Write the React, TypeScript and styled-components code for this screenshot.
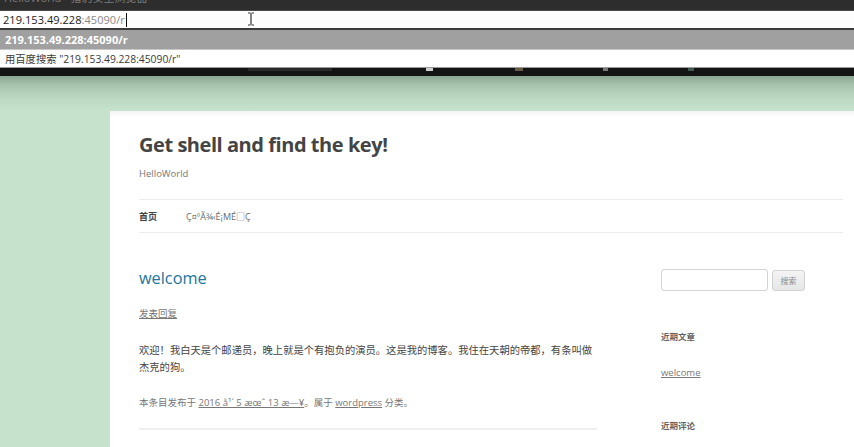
import React from "react";
import styled, { createGlobalStyle } from "styled-components";

const Global = createGlobalStyle`
  html, body { margin: 0; padding: 0; }
  body { width: 854px; height: 447px; overflow: hidden; background: #c6e2cc; }
  #root { width: 854px; height: 447px; }
`;

const CJK = `"Open Sans", "Noto Sans CJK SC", sans-serif`;

const Screen = styled.div`
  width: 854px;
  height: 447px;
  overflow: hidden;
  display: flex;
  flex-direction: column;
  font-family: ${CJK};
`;

const TitleBar = styled.div`
  height: 11px;
  flex: none;
  background: #2d2d2d;
  overflow: hidden;
  border-bottom: 1px solid #4a4a4a;
  box-sizing: border-box;
`;

const TitleText = styled.div`
  margin-top: -9px;
  padding-left: 4px;
  font-size: 11px;
  line-height: 14px;
  color: #7c7c7c;
  white-space: nowrap;
`;

const AddressBar = styled.div`
  position: relative;
  height: 17px;
  flex: none;
  background: #fdfdfd;
  border-bottom: 2px solid #3a3a3a;
  display: flex;
  align-items: center;
  padding-left: 3px;
  font-size: 11px;
  letter-spacing: 0.05px;
`;

const Host = styled.span`
  color: #222;
`;

const Rest = styled.span`
  color: #8a8a8a;
`;

const Caret = styled.span`
  display: inline-block;
  width: 1px;
  height: 14px;
  background: #111;
  margin-left: 1px;
`;

const IBeam = styled.svg`
  position: absolute;
  left: 247px;
  top: 1px;
`;

const Suggestion = styled.div<{ $active?: boolean }>`
  height: ${(p) => (p.$active ? "19px" : "17px")};
  flex: none;
  display: flex;
  align-items: center;
  padding-left: 5px;
  background: ${(p) => (p.$active ? "#a0a0a0" : "#ffffff")};
  color: ${(p) => (p.$active ? "#ffffff" : "#3a3a3a")};
  font-weight: ${(p) => (p.$active ? 700 : 400)};
  font-size: ${(p) => (p.$active ? "11px" : "10.3px")};
  border-bottom: 1px solid ${(p) => (p.$active ? "#c8c8c8" : "#9a9a9a")};
  white-space: nowrap;
`;

const ToolStrip = styled.div`
  height: 8px;
  flex: none;
  background: #141414;
  display: flex;
  align-items: flex-start;
`;

const Blip = styled.span<{ $w: number; $ml: number; $c: string }>`
  display: block;
  width: ${(p) => p.$w}px;
  height: 3px;
  margin-left: ${(p) => p.$ml}px;
  background: ${(p) => p.$c};
`;

const Backdrop = styled.div`
  flex: 1;
  background: linear-gradient(
    to bottom,
    #8ea694 0px,
    #a9c4af 10px,
    #bcd8c2 22px,
    #c6e2cc 34px
  );
  padding: 35px 0 0 110px;
  overflow: hidden;
`;

const Page = styled.div`
  background: #ffffff;
  height: 100%;
  box-sizing: border-box;
  padding: 16px 11px 0 29px;
  background-image: linear-gradient(to bottom, #f4f4f4 0px, #ffffff 6px);
`;

const SiteTitle = styled.h1`
  margin: 0;
  font-family: "Open Sans", sans-serif;
  font-weight: 700;
  font-size: 20px;
  line-height: 36px;
  color: #444444;
  letter-spacing: -0.45px;
`;

const Tagline = styled.div`
  margin-top: 3px;
  font-size: 9.5px;
  line-height: 16px;
  color: #777777;
`;

const Nav = styled.nav`
  margin-top: 17px;
  border-top: 1px solid #ededed;
  border-bottom: 1px solid #ededed;
  height: 32px;
  display: flex;
  align-items: center;
  gap: 29px;
  font-size: 9px;
  color: #5e5e5e;
`;

const NavItem = styled.span<{ $bold?: boolean }>`
  font-weight: ${(p) => (p.$bold ? 700 : 400)};
  color: ${(p) => (p.$bold ? "#444" : "#6a6a6a")};
`;

const Columns = styled.div`
  display: grid;
  grid-template-columns: 458px 182px;
  column-gap: 64px;
`;

const Main = styled.main`
  padding-top: 33px;
`;

const PostTitle = styled.h2`
  margin: 0;
  font-family: "Open Sans", sans-serif;
  font-weight: 400;
  font-size: 16.3px;
  line-height: 24px;
  color: #21759b;
`;

const ReplyLink = styled.a`
  display: inline-block;
  margin-top: 17px;
  font-size: 9.5px;
  line-height: 14px;
  color: #777;
  text-decoration: underline;
`;

const Body = styled.p`
  margin: 20px 0 0 0;
  font-size: 10.3px;
  line-height: 17px;
  color: #444;
`;

const Meta = styled.div`
  margin-top: 19px;
  font-size: 9.5px;
  line-height: 16px;
  color: #777;
  padding-bottom: 17px;
  border-bottom: 2px solid #efefef;
`;

const MetaLink = styled.a`
  color: #777;
  text-decoration: underline;
`;

const Sidebar = styled.aside`
  padding-top: 36px;
`;

const SearchRow = styled.div`
  display: flex;
  gap: 4px;
  align-items: center;
`;

const SearchInput = styled.div`
  width: 107px;
  height: 22px;
  box-sizing: border-box;
  border: 1px solid #d4d4d4;
  border-radius: 3px;
  background: #fff;
`;

const SearchButton = styled.div`
  width: 33px;
  height: 21px;
  box-sizing: border-box;
  border: 1px solid #d2d2d2;
  border-radius: 3px;
  background: linear-gradient(to bottom, #f4f4f4, #e6e6e6);
  font-size: 8px;
  color: #8a8a8a;
  display: flex;
  align-items: center;
  justify-content: center;
`;

const WidgetTitle = styled.h3<{ $mt: number }>`
  margin: ${(p) => p.$mt}px 0 0 0;
  font-size: 8.5px;
  line-height: 12px;
  font-weight: 700;
  color: #636363;
`;

const WidgetLink = styled.a`
  display: block;
  margin-top: 24px;
  font-family: "Open Sans", sans-serif;
  font-size: 9.5px;
  line-height: 12px;
  color: #7a7a7a;
  text-decoration: underline;
`;

export default function App() {
  return (
    <>
      <Global />
      <Screen>
        <TitleBar>
          <TitleText>HelloWorld - 猎豹安全浏览器</TitleText>
        </TitleBar>
        <AddressBar>
          <Host>219.153.49.228</Host>
          <Rest>:45090/r</Rest>
          <Caret />
          <IBeam width="8" height="14" viewBox="0 0 8 14">
            <path d="M1 1h2.5M4.5 1H7M4 1.5v11M1 13h2.5M4.5 13H7" stroke="#333" strokeWidth="1.2" fill="none" />
          </IBeam>
        </AddressBar>
        <Suggestion $active>219.153.49.228:45090/r</Suggestion>
        <Suggestion>用百度搜索 "219.153.49.228:45090/r"</Suggestion>
        <ToolStrip>
          <Blip $w={84} $ml={248} $c="#2a2a2a" />
          <Blip $w={7} $ml={94} $c="#cfcfcf" />
          <Blip $w={8} $ml={82} $c="#6a5a4a" />
          <Blip $w={5} $ml={80} $c="#777" />
          <Blip $w={6} $ml={80} $c="#3f5a50" />
        </ToolStrip>
        <Backdrop>
          <Page>
            <header>
              <SiteTitle>Get shell and find the key!</SiteTitle>
              <Tagline>HelloWorld</Tagline>
            </header>
            <Nav>
              <NavItem $bold>首页</NavItem>
              <NavItem>Ç¤ºÃ¾‹É¡MÉ□Ç</NavItem>
            </Nav>
            <Columns>
              <Main>
                <PostTitle>welcome</PostTitle>
                <ReplyLink>发表回复</ReplyLink>
                <Body>
                  欢迎！我白天是个邮递员，晚上就是个有抱负的演员。这是我的博客。我住在天朝的帝都，有条叫做杰克的狗。
                </Body>
                <Meta>
                  本条目发布于 <MetaLink>2016 å¹´ 5 æœˆ 13 æ—¥</MetaLink>。属于{" "}
                  <MetaLink>wordpress</MetaLink> 分类。
                </Meta>
              </Main>
              <Sidebar>
                <SearchRow>
                  <SearchInput />
                  <SearchButton>搜索</SearchButton>
                </SearchRow>
                <WidgetTitle $mt={40}>近期文章</WidgetTitle>
                <WidgetLink>welcome</WidgetLink>
                <WidgetTitle $mt={41}>近期评论</WidgetTitle>
              </Sidebar>
            </Columns>
          </Page>
        </Backdrop>
      </Screen>
    </>
  );
}
